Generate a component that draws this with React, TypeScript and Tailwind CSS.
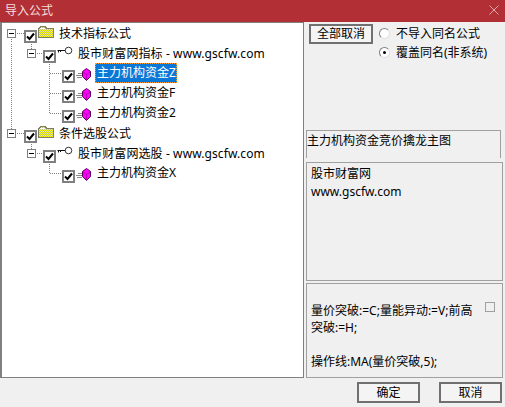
const FONT = "font-['Noto_Sans','Noto_Sans_CJK_SC',sans-serif]";

type TreeRow = {
  level: 0 | 1 | 2;
  label: string;
  lines: string;
  expander?: [number, number];
  selected?: boolean;
};

const dotted = 'M11 0V20';

const rows: TreeRow[] = [
  { level: 0, label: '技术指标公式', lines: 'M11 15V20M16 10H24', expander: [7, 6] },
  { level: 1, label: '股市财富网指标 - www.gscfw.com', lines: `${dotted}M31 0V6M36 10H43`, expander: [27, 6] },
  { level: 2, label: '主力机构资金Z', lines: `${dotted}M49 0V20M49 10H62`, selected: true },
  { level: 2, label: '主力机构资金F', lines: `${dotted}M49 0V20M49 10H62` },
  { level: 2, label: '主力机构资金2', lines: `${dotted}M49 0V10H62` },
  { level: 0, label: '条件选股公式', lines: 'M11 0V6M16 10H24', expander: [7, 6] },
  { level: 1, label: '股市财富网选股 - www.gscfw.com', lines: 'M31 0V6M36 10H43', expander: [27, 6] },
  { level: 2, label: '主力机构资金X', lines: 'M49 0V10H62' },
];

const gutterWidth = { 0: 22, 1: 41, 2: 60 };

function Checkbox() {
  return (
    <div className="mt-[7px] flex h-[13px] w-[13px] shrink-0 items-center justify-center border-2 border-[#808080] bg-white">
      <svg width="9" height="9" viewBox="0 0 9 9" fill="none">
        <path d="M1 4.5L3.5 7L8 1.5" stroke="#000" strokeWidth="2" />
      </svg>
    </div>
  );
}

function FolderIcon() {
  return (
    <svg width="16" height="14" viewBox="0 0 16 14" className="mt-[2px] shrink-0" shapeRendering="crispEdges">
      <defs>
        <pattern id="dither" width="2" height="2" patternUnits="userSpaceOnUse">
          <rect width="2" height="2" fill="#ffff00" />
          <rect width="1" height="1" fill="#c0c080" />
          <rect x="1" y="1" width="1" height="1" fill="#c0c080" />
        </pattern>
      </defs>
      <path d="M0.5 3.5V12.5H15.5V3.5H8.5L7.5 1.5H2.5L1.5 3.5Z" fill="url(#dither)" stroke="#808060" />
      <path d="M2 3H7" stroke="#fff" />
    </svg>
  );
}

function KeyIcon() {
  return (
    <svg width="16" height="10" viewBox="0 0 16 10" className="mt-[3px] shrink-0" fill="none">
      <circle cx="11.5" cy="4.5" r="3.3" stroke="#333" strokeWidth="1" />
      <path d="M0.5 4.5H8.2M1.5 4.5V6.5M3.5 4.5V6" stroke="#111" strokeWidth="1" />
    </svg>
  );
}

function FormulaIcon() {
  return (
    <svg width="15" height="13" viewBox="0 0 15 13" className="mt-[5px] shrink-0" fill="none" shapeRendering="crispEdges">
      <path d="M2 5.5H6M0 7.5H6M1 9.5H6" stroke="#8a8a8a" strokeWidth="1" />
      <path d="M10.5 0.5L14.5 3.5V8.5L10.5 12.5L6.5 8.5V3.5Z" fill="#ff00ff" stroke="#500050" strokeWidth="1" shapeRendering="auto" />
      <path d="M7 4L10.5 6.5L14 4M10.5 6.5V12" stroke="#a000a0" strokeWidth="0.7" shapeRendering="auto" />
    </svg>
  );
}

function Row({ row }: { row: TreeRow }) {
  return (
    <div className="flex h-[20px] items-start">
      <svg width={gutterWidth[row.level]} height="20" className="shrink-0" fill="none" shapeRendering="crispEdges">
        <path d={row.lines} stroke="#808080" strokeDasharray="1 1" transform="translate(-1.5 0.5)" />
        {row.expander && (
          <g transform={`translate(${row.expander[0] - 2} ${row.expander[1]})`}>
            <rect x="0.5" y="0.5" width="8" height="8" fill="#fff" stroke="#808080" />
            <path d="M2 4.5H7" stroke="#000" />
          </g>
        )}
      </svg>
      <Checkbox />
      <div className="ml-[1px] flex items-start">
        {row.level === 0 && <FolderIcon />}
        {row.level === 1 && <KeyIcon />}
        {row.level === 2 && <FormulaIcon />}
      </div>
      <span
        className={
          row.level === 2
            ? `ml-[4px] flex h-[20px] items-center whitespace-nowrap pl-[2px] text-[12px] leading-[20px] ${
                row.selected ? 'w-[82px] bg-[#0a78d7] text-white outline-1 -outline-offset-1 outline-dotted outline-[#ffa030]' : 'text-black'
              }`
            : `whitespace-nowrap pt-[1px] text-[12px] leading-[19px] text-black ${
                row.level === 0 ? 'ml-[5px]' : 'ml-[5px] tracking-[0.1px]'
              }`
        }
      >
        {row.label}
      </span>
    </div>
  );
}

function DialogButton({ children, className }: { children: string; className: string }) {
  return (
    <button
      type="button"
      className={`flex items-center justify-center border-2 border-[#707070] bg-[#f4f4f4] text-[12px] text-black ${className}`}
    >
      {children}
    </button>
  );
}

function Radio({ label, checked }: { label: string; checked?: boolean }) {
  return (
    <div className="flex h-[19px] items-center">
      <div className="flex h-[11px] w-[11px] items-center justify-center rounded-full border border-t-[#808080] border-l-[#808080] border-r-[#e0e0e0] border-b-[#e0e0e0] bg-white">
        {checked && <div className="h-[3px] w-[3px] rounded-full bg-black" />}
      </div>
      <span className="ml-[6px] text-[12px] text-black">{label}</span>
    </div>
  );
}

export default function App() {
  return (
    <div className={`${FONT} flex h-[407px] w-[505px] flex-col overflow-hidden bg-[#f0f0f0]`}>
      <div className="flex h-[22px] shrink-0 items-center justify-between bg-[#b22f35] pl-[5px] pr-[6px]">
        <span className="text-[12px] leading-[20px] text-[#f6dede]">导入公式</span>
        <svg width="10" height="10" viewBox="0 0 10 10" className="mb-[2px]" fill="none">
          <path d="M0.5 0.5L9.5 9.5M9.5 0.5L0.5 9.5" stroke="#eec8c8" strokeWidth="0.8" />
        </svg>
      </div>
      <div className="flex h-[356px]">
        <div className="h-full w-[304px] shrink-0 border border-l-2 border-[#808080] bg-white">
          {rows.map((row) => (
            <Row key={row.label} row={row} />
          ))}
        </div>
        <div className="flex min-w-0 flex-1 flex-col pl-[2px] pr-[2px]">
          <div className="flex h-[108px] items-start pl-[3px] pt-[2px]">
            <DialogButton className="h-[20px] w-[64px]">全部取消</DialogButton>
            <div className="ml-[6px] flex flex-col">
              <Radio label="不导入同名公式" />
              <Radio label="覆盖同名(非系统)" checked />
            </div>
          </div>
          <div className="h-[28px] w-[195px] border border-b-0 border-[#a0a0a0] text-[12px] leading-[19px] text-black">
            主力机构资金竞价擒龙主图
          </div>
          <div className="mt-[4px] h-[119px] border border-[#a0a0a0] px-[4px] pt-[2px] text-[12px] leading-[18px] text-black">
            <div>股市财富网</div>
            <div>www.gscfw.com</div>
          </div>
          <div className="mt-[2px] flex h-[95px] items-start border border-[#a0a0a0] pl-[4px] pr-[6px] text-[12px] leading-[17px] text-black">
            <div className="w-[170px] pt-[18px]">
              <div>量价突破:=C;量能异动:=V;前高突破:=H;</div>
              <div className="mt-[17px]">操作线:MA(量价突破,5);</div>
            </div>
            <div className="ml-[4px] mt-[18px] h-[10px] w-[10px] border border-[#a0a0a0]" />
          </div>
        </div>
      </div>
      <div className="flex flex-1 items-start justify-end gap-[19px] pr-[3px] pt-[4px]">
        <DialogButton className="h-[21px] w-[63px]">确定</DialogButton>
        <DialogButton className="h-[21px] w-[63px]">取消</DialogButton>
      </div>
    </div>
  );
}
